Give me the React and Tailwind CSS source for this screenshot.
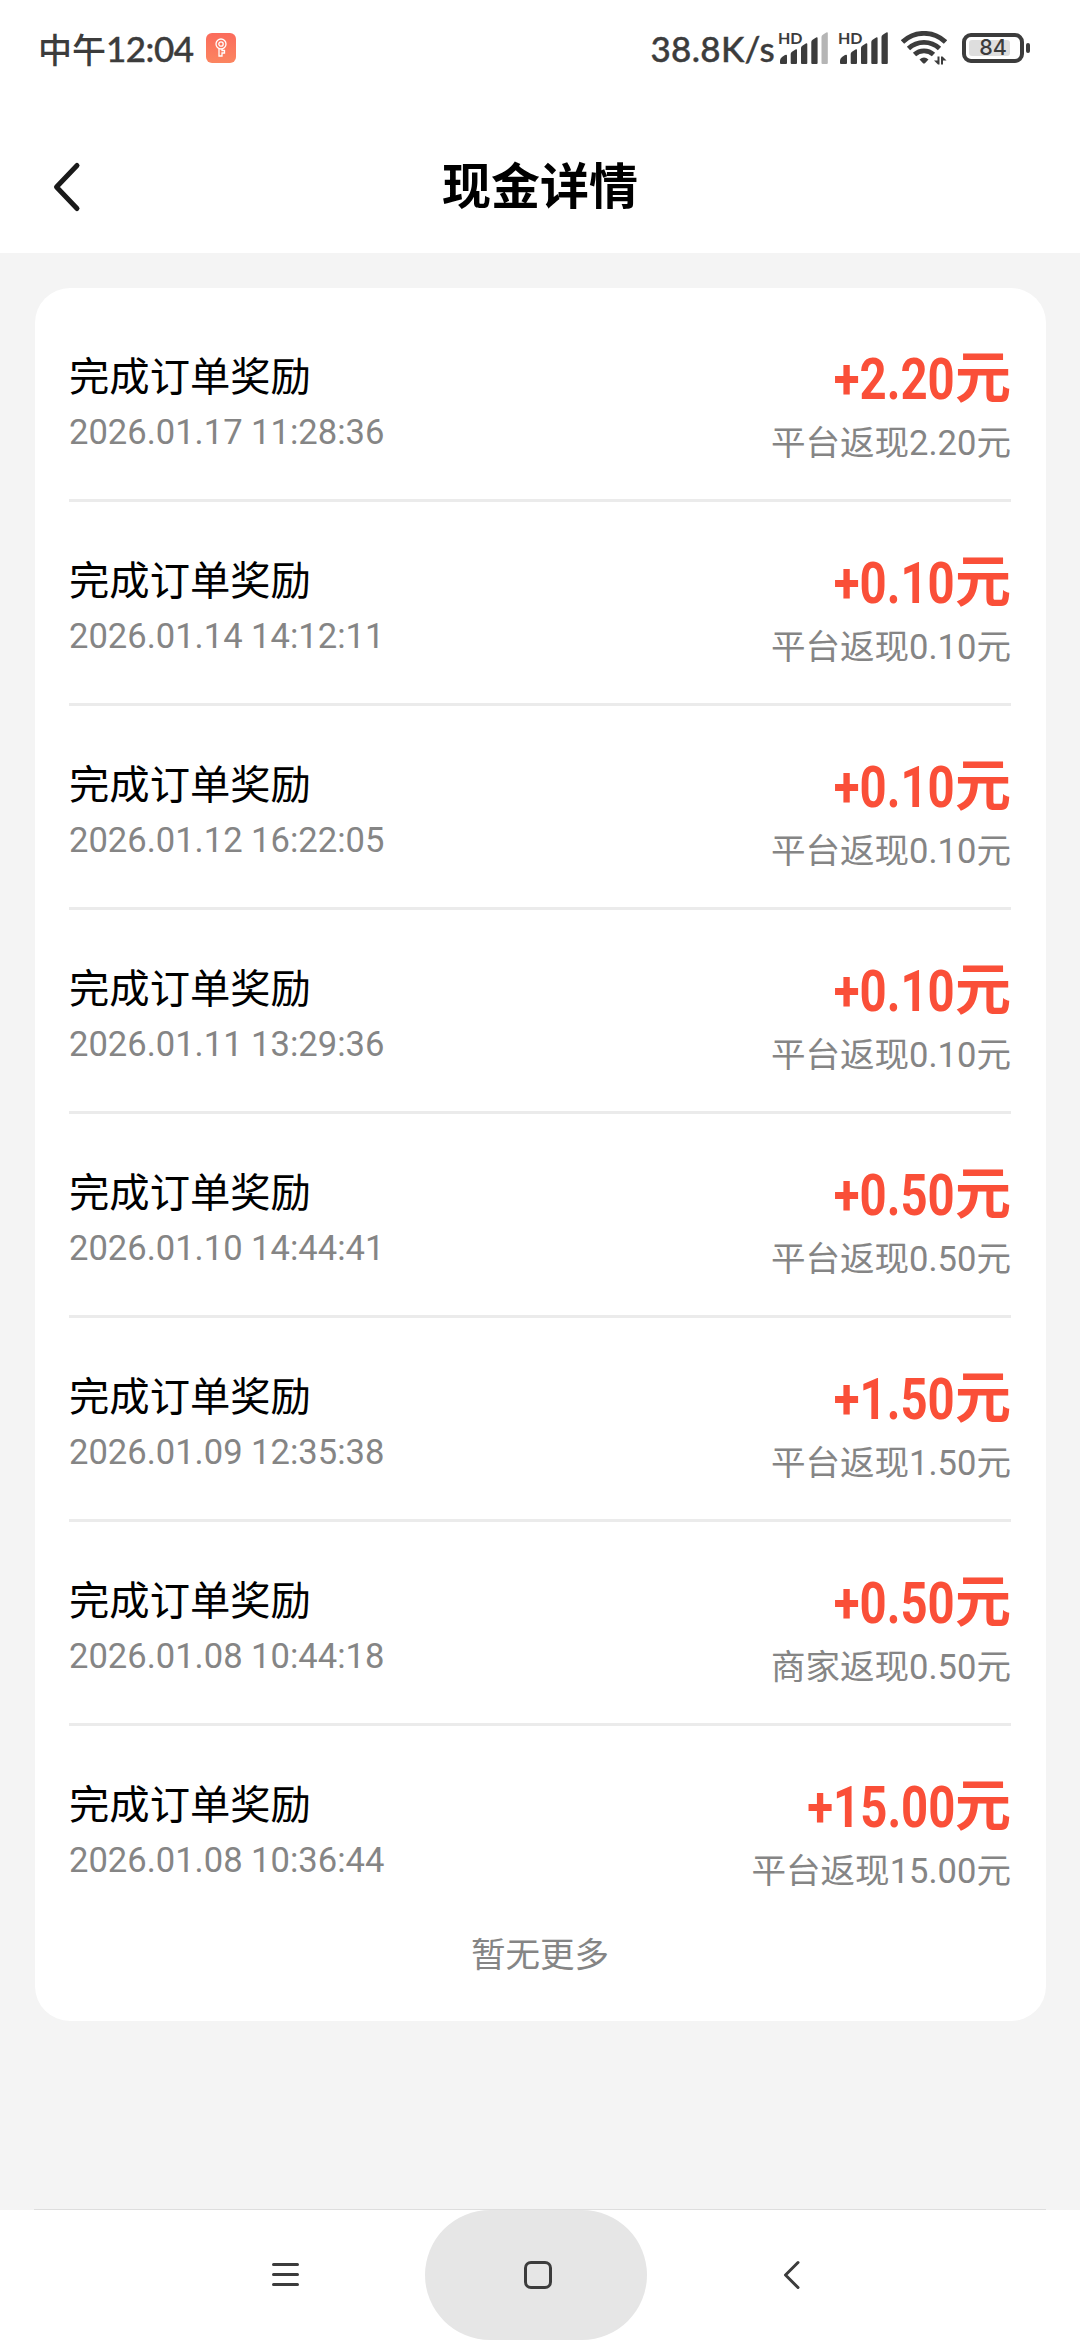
const records = [
  { id: 1, time: '2026.01.17 11:28:36', amount: '2.20', source: '平台返现' },
  { id: 2, time: '2026.01.14 14:12:11', amount: '0.10', source: '平台返现' },
  { id: 3, time: '2026.01.12 16:22:05', amount: '0.10', source: '平台返现' },
  { id: 4, time: '2026.01.11 13:29:36', amount: '0.10', source: '平台返现' },
  { id: 5, time: '2026.01.10 14:44:41', amount: '0.50', source: '平台返现' },
  { id: 6, time: '2026.01.09 12:35:38', amount: '1.50', source: '平台返现' },
  { id: 7, time: '2026.01.08 10:44:18', amount: '0.50', source: '商家返现' },
  { id: 8, time: '2026.01.08 10:36:44', amount: '15.00', source: '平台返现' },
];

// Mobile signal, the last bar is dimmed when the level is below full
function Signal({ full }) {
  return (
    <div className="relative h-[36px] w-[50px] shrink-0">
      <span className="absolute left-0 top-0 whitespace-nowrap font-['Lato',sans-serif] text-[16px] font-bold leading-[16px]">HD</span>
      <svg width="50" height="36" viewBox="0 0 50 36" fill="#3c3c3c">
        <path d="M2 33V30.500q0-2 2-3.500l3-2q2-1 2 .8V33q0 1-1 1H3q-1 0-1-1Z" />
        <path d="M12.700 33V24q0-1.500 1.300-2.300l3.500-2.300q1.500-.8 1.500 .8V33q0 1-1 1h-4.300q-1 0-1-1Z" />
        <path d="M23 33V18q0-1.500 1.300-2.300l3.500-2.300q1.500-.8 1.500 .8V33q0 1-1 1H24q-1 0-1-1Z" />
        <path d="M33.300 33V12q0-1.500 1.300-2.300l3.500-2.300q1.500-.8 1.500 .8V33q0 1-1 1h-4.300q-1 0-1-1Z" />
        <path d="M43.500 33V7q0-1.500 1.300-2.300l3.500-2.300q1.500-.8 1.500 .8V33q0 1-1 1h-4.300q-1 0-1-1Z" fill={full ? '#3c3c3c' : '#b5b5b5'} />
      </svg>
    </div>
  );
}

function Wifi() {
  return (
    <svg width="46" height="34" viewBox="0 0 46 34" fill="none" stroke="#3c3c3c" strokeWidth="4.800" className="shrink-0">
      <path d="M1.500 11a31 31 0 0 1 43 0" />
      <path d="M7.500 17.500a22.500 22.500 0 0 1 31 0" />
      <path d="M13.500 23.500a14 14 0 0 1 19 0" />
      <path d="M18.500 28.500q4.500-4 9 0l-3.300 3.500q-1.200 1.200-2.400 0Z" fill="#3c3c3c" stroke="none" />
      <path d="M33 29.500h3.500V25.500h2V33.500h-1.500ZM40 25.500h1.500l4 4H42V33.500h-2Z" fill="#3c3c3c" stroke="none" />
    </svg>
  );
}

function Battery() {
  return (
    <div className="flex items-center">
      <div className="relative flex h-[30px] w-[62px] items-center justify-center rounded-[9px] border-[4px] border-[#3c3c3c]">
        <div className="absolute left-[3px] top-[3px] h-[16px] w-[41px] rounded-[3px] bg-[#dedede]" />
        <span className="relative font-['Inter'] text-[21.500px] font-medium leading-none text-[#3c3c3c]">84</span>
      </div>
      <div className="ml-[2px] h-[10px] w-[4px] rounded-full bg-[#3c3c3c]" />
    </div>
  );
}

function StatusBar() {
  return (
    <div className="flex h-[96px] items-center justify-between pl-[38px] pr-[50px] font-['Lato','Noto_Sans_CJK_SC',sans-serif] text-[35px] font-medium text-[#3c3c3c]">
      <div className="flex items-center">
        <span className="whitespace-nowrap font-['Noto_Sans_CJK_SC',sans-serif] text-[34px]">中午</span>
        <span className="whitespace-nowrap tracking-[-0.500px] [-webkit-text-stroke:0.400px_#3c3c3c]">12:04</span>
        <span className="ml-[12px] flex h-[30px] w-[30px] items-center justify-center rounded-[6px] bg-linear-to-b from-[#fb6b5c] to-[#fb8560]">
          <svg width="12" height="20" viewBox="0 0 12 20" fill="none" stroke="#fff" strokeWidth="1.300">
            <circle cx="6" cy="6" r="5" />
            <circle cx="6" cy="6" r="2.200" />
            <path d="M4 11v7h3v-3h2.500v-2.500H7V11" />
          </svg>
        </span>
      </div>
      <div className="flex items-center">
        <span className="whitespace-nowrap tracking-[0.300px] [-webkit-text-stroke:0.400px_#3c3c3c]">38.8K/s</span>
        <div className="ml-[3px] flex items-center gap-[10px]">
          <Signal />
          <Signal full />
        </div>
        <div className="ml-[13px] mr-[15px]">
          <Wifi />
        </div>
        <Battery />
      </div>
    </div>
  );
}

function Header() {
  return (
    <div className="relative flex h-[157px] items-center justify-center pt-[26px]">
      <svg width="30" height="52" viewBox="0 0 30 52" fill="none" stroke="#1a1a1a" strokeWidth="5" strokeLinecap="round" strokeLinejoin="round" className="absolute left-[52px] top-[65px]">
        <path d="M25 4.500L4.500 26L25 47.500" />
      </svg>
      <h1 className="text-[49px] font-bold leading-none text-black">现金详情</h1>
    </div>
  );
}

function RecordRow({ record, last }) {
  return (
    <div className={`flex h-[204px] justify-between ${last ? '' : 'border-b-[3px] border-[#ebebeb]'}`}>
      <div className="pt-[53px]">
        <div className="text-[40.320px] leading-[54px] text-black">完成订单奖励</div>
        <div className="text-[34.560px] leading-[54px] text-[#858585]">{record.time}</div>
      </div>
      <div className="flex flex-col items-end pt-[50px]">
        <div className="flex h-[64px] items-start text-[#fa4f38]">
          <span className="origin-right scale-x-[0.83] text-[57px] font-bold leading-[64px]">+{record.amount}</span>
          <span className="text-[56px] font-bold leading-[60px]">元</span>
        </div>
        <div className="text-[34.560px] leading-[62px] text-[#858585]">
          {record.source}
          {record.amount}元
        </div>
      </div>
    </div>
  );
}

function NavBar() {
  return (
    <div className="flex h-[130px] items-center bg-white">
      <div className="flex w-[425px] justify-end pr-[125px]">
        <svg width="29" height="28" viewBox="0 0 29 28" stroke="#3c3c3c" strokeWidth="3" strokeLinecap="round">
          <path d="M2.500 3.500h24M2.500 13.500h24M2.500 23.500h24" />
        </svg>
      </div>
      <div className="flex h-[130px] w-[222px] items-center justify-center rounded-[65px] bg-[#e6e6e6]">
        <div className="mr-[-4px] h-[28px] w-[28px] rounded-[7px] border-[3px] border-[#3c3c3c]" />
      </div>
      <div className="pl-[136px]">
        <svg width="18" height="30" viewBox="0 0 18 30" fill="none" stroke="#3c3c3c" strokeWidth="3" strokeLinecap="round" strokeLinejoin="round">
          <path d="M15 2.500L2.500 15L15 27.500" />
        </svg>
      </div>
    </div>
  );
}

export default function App() {
  return (
    <div className="flex h-[2340px] w-[1080px] flex-col overflow-hidden bg-[#f4f4f4] font-['Roboto','Noto_Sans_CJK_SC',sans-serif]">
      <div className="bg-white">
        <StatusBar />
        <Header />
      </div>
      <main className="flex-1 px-[34.500px] pt-[35px]">
        <div className="h-[1733px] rounded-[35px] bg-white px-[34.500px] pt-[10px]">
          {records.map((record, i) => (
            <RecordRow key={record.id} record={record} last={i === records.length - 1} />
          ))}
          <p className="text-center text-[34.560px] leading-[50px] text-[#858585]">暂无更多</p>
        </div>
      </main>
      <div className="mx-[34px] h-px bg-[#dedede]" />
      <NavBar />
    </div>
  );
}
